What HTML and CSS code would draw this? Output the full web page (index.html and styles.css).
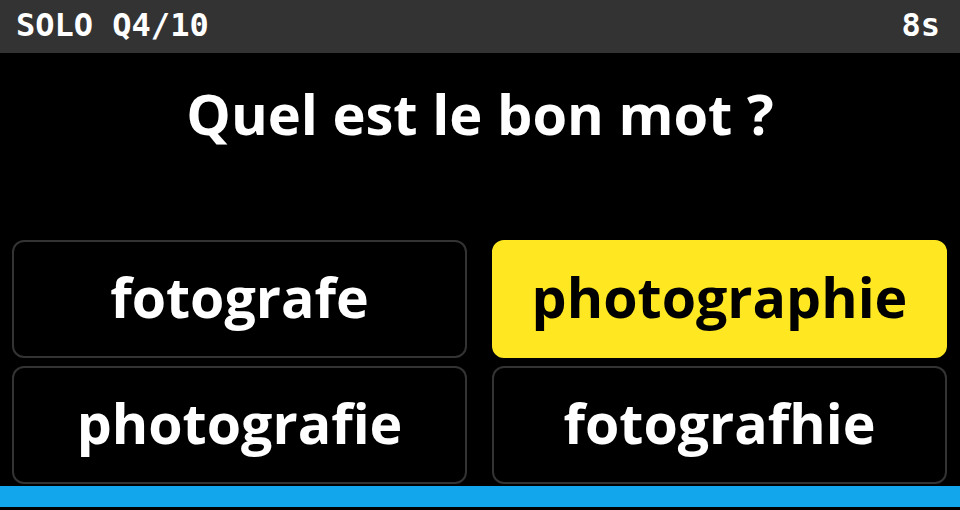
FILE: index.html
```html
<!DOCTYPE html>
<html lang="fr">
<head>
<meta charset="utf-8">
<title>Quiz</title>
<link rel="stylesheet" href="styles.css">
</head>
<body>
<div class="screen">
  <header class="topbar">
    <span class="mode">SOLO Q4/10</span>
    <span class="timer">8s</span>
  </header>
  <h1 class="question">Quel est le bon mot ?</h1>
  <div class="answers">
    <div class="answer">fotografe</div>
    <div class="answer selected">photographie</div>
    <div class="answer">photografie</div>
    <div class="answer">fotografhie</div>
  </div>
  <div class="progress"></div>
</div>
</body>
</html>
```

FILE: styles.css
```css
html, body {
  margin: 0;
  padding: 0;
  background: #000;
}
.screen {
  width: 960px;
  height: 510px;
  display: flex;
  flex-direction: column;
  background: #000;
  overflow: hidden;
}
.topbar {
  height: 53px;
  flex: none;
  background: #333333;
  display: flex;
  align-items: center;
  justify-content: space-between;
  padding: 0 20px 3px 16px;
  box-sizing: border-box;
  font-family: "DejaVu Sans Mono", monospace;
  font-weight: bold;
  font-size: 32px;
  color: #fff;
  white-space: pre;
}
.question {
  margin: 0;
  height: 187px;
  flex: none;
  box-sizing: border-box;
  padding-top: 25px;
  text-align: center;
  font-family: "Open Sans", sans-serif;
  font-weight: bold;
  font-size: 56px;
  line-height: 70px;
  color: #fff;
}
.answers {
  display: grid;
  grid-template-columns: 455px 455px;
  grid-template-rows: 118px 118px;
  column-gap: 25px;
  row-gap: 8px;
  padding: 0 13px 0 12px;
  flex: none;
}
.answer {
  border: 2px solid #333333;
  border-radius: 12px;
  box-sizing: border-box;
  display: flex;
  align-items: center;
  justify-content: center;
  font-family: "Open Sans", sans-serif;
  font-weight: bold;
  font-size: 55.5px;
  color: #fff;
  padding-bottom: 6px;
}
.answer.selected {
  background: #ffe822;
  border-color: #ffe822;
  color: #000;
}
.progress {
  margin-top: 2px;
  height: 21px;
  flex: none;
  background: #12a6ec;
}
```
